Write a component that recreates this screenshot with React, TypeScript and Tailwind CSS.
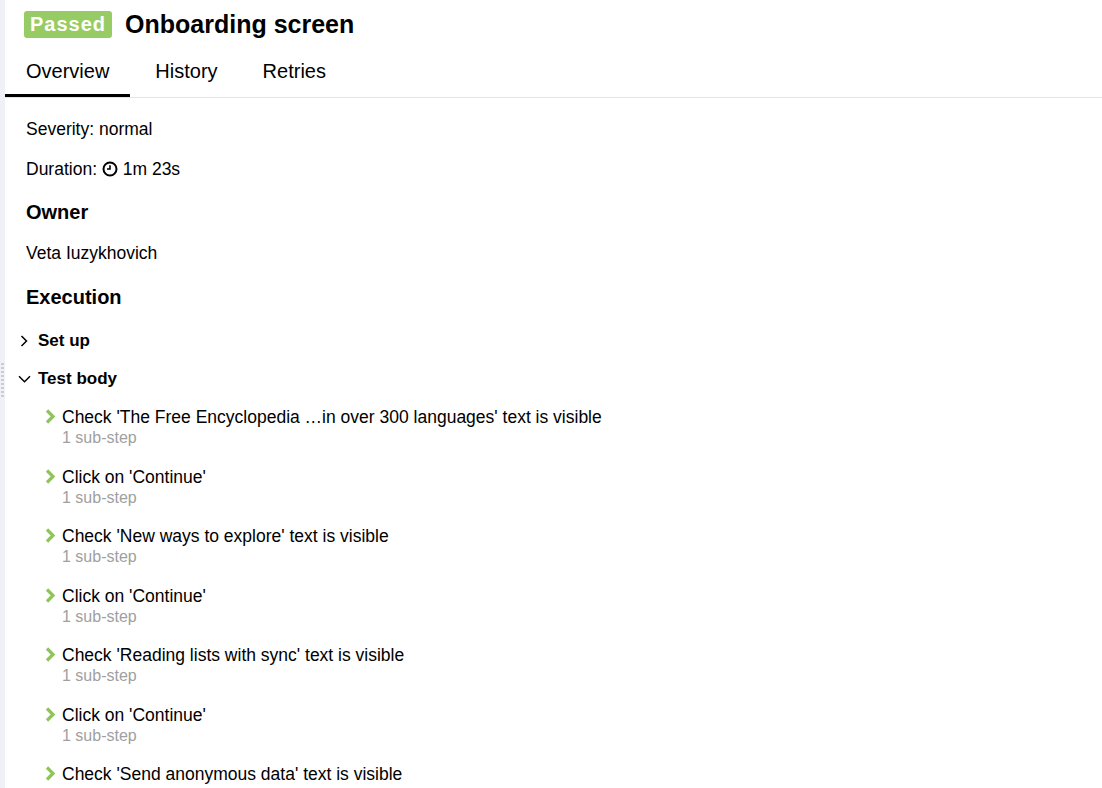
const steps = [
  "Check 'The Free Encyclopedia …in over 300 languages' text is visible",
  "Click on 'Continue'",
  "Check 'New ways to explore' text is visible",
  "Click on 'Continue'",
  "Check 'Reading lists with sync' text is visible",
  "Click on 'Continue'",
  "Check 'Send anonymous data' text is visible",
];

function ClockIcon() {
  return (
    <svg viewBox="0 0 16 16" className="h-[16px] w-[16px]" fill="none" stroke="currentColor" strokeWidth="2">
      <circle cx="8" cy="8" r="6.5" />
      <path d="M8 4.2 V8 H5" strokeWidth="1.6" />
    </svg>
  );
}

export default function App() {
  return (
    <div className="flex h-[788px] w-[1102px] overflow-hidden bg-white text-black font-['Liberation_Sans',Arial,sans-serif]">
      {/* left splitter */}
      <div className="relative w-[5px] shrink-0 bg-[#eef1f5]">
        <div className="absolute left-[1px] top-[363px] flex flex-col gap-[2px]">
          {Array.from({ length: 9 }).map((_, i) => (
            <span key={i} className="h-[2px] w-[3px] bg-[#c9ccd1]"></span>
          ))}
        </div>
      </div>

      <div className="flex-1">
        {/* Header */}
        <div className="flex items-center gap-[13px] pl-[19px] pt-[11px]">
          <span className="h-[27px] rounded-[3px] bg-[#97cc64] px-[6px] text-[20px] font-bold leading-[27px] tracking-[0.05em] text-white">Passed</span>
          <h1 className="text-[25px] font-bold leading-[25px]">Onboarding screen</h1>
        </div>

        {/* Tabs */}
        <div className="mt-[21px] flex border-b border-[#e4e4e4]">
          <div className="border-b-[3px] border-black px-[21px] pb-[11px] text-[20px] leading-[24px]">Overview</div>
          <div className="px-[25px] pb-[11px] text-[20px] leading-[24px]">History</div>
          <div className="px-[20px] pb-[11px] text-[20px] leading-[24px]">Retries</div>
        </div>

        {/* Content */}
        <div className="pl-[21px] text-[17.5px]">
          <div className="mt-[20px] leading-[22px]">Severity: normal</div>
          <div className="mt-[18px] flex items-center leading-[22px]">
            Duration:&nbsp;<ClockIcon />&nbsp;1m 23s
          </div>
          <h3 className="mt-[21px] text-[20px] font-bold leading-[22px]">Owner</h3>
          <div className="mt-[19px] leading-[22px]">Veta Iuzykhovich</div>
          <h3 className="mt-[22px] text-[20px] font-bold leading-[22px]">Execution</h3>
        </div>

        <div className="mt-[22px] pl-[12px]">
          <div className="flex items-center gap-[7px] text-[17px] font-bold leading-[22px]">
            <span className="flex w-[14px] justify-center">
              <svg viewBox="0 0 8 12" className="h-[12px] w-[8px]" fill="none" stroke="currentColor" strokeWidth="1.5">
                <path d="M1.5 1 L6.5 6 L1.5 11" />
              </svg>
            </span>
            Set up
          </div>
          <div className="mt-[16px] flex items-center gap-[7px] text-[17px] font-bold leading-[22px]">
            <span className="flex w-[14px] justify-center">
              <svg viewBox="0 0 13 8" className="h-[8px] w-[13px]" fill="none" stroke="currentColor" strokeWidth="1.5">
                <path d="M1 1.2 L6.5 6.7 L12 1.2" />
              </svg>
            </span>
            Test body
          </div>
        </div>

        <div className="mt-[16px] flex flex-col gap-[18.5px] pl-[40px]">
          {steps.map((s, i) => (
            <div key={i} className="flex gap-[6px]">
              <svg viewBox="0 0 11 15" className="mt-[3px] h-[15px] w-[11px] shrink-0" fill="none" stroke="#8fc45a" strokeWidth="3.2">
                <path d="M2 1.5 L8 7.5 L2 13.5" />
              </svg>
              <div>
                <div className="text-[17.5px] leading-[22px]">{s}</div>
                <div className="text-[16px] leading-[19px] text-[#a0a0a0]">1 sub-step</div>
              </div>
            </div>
          ))}
        </div>
      </div>
    </div>
  );
}
